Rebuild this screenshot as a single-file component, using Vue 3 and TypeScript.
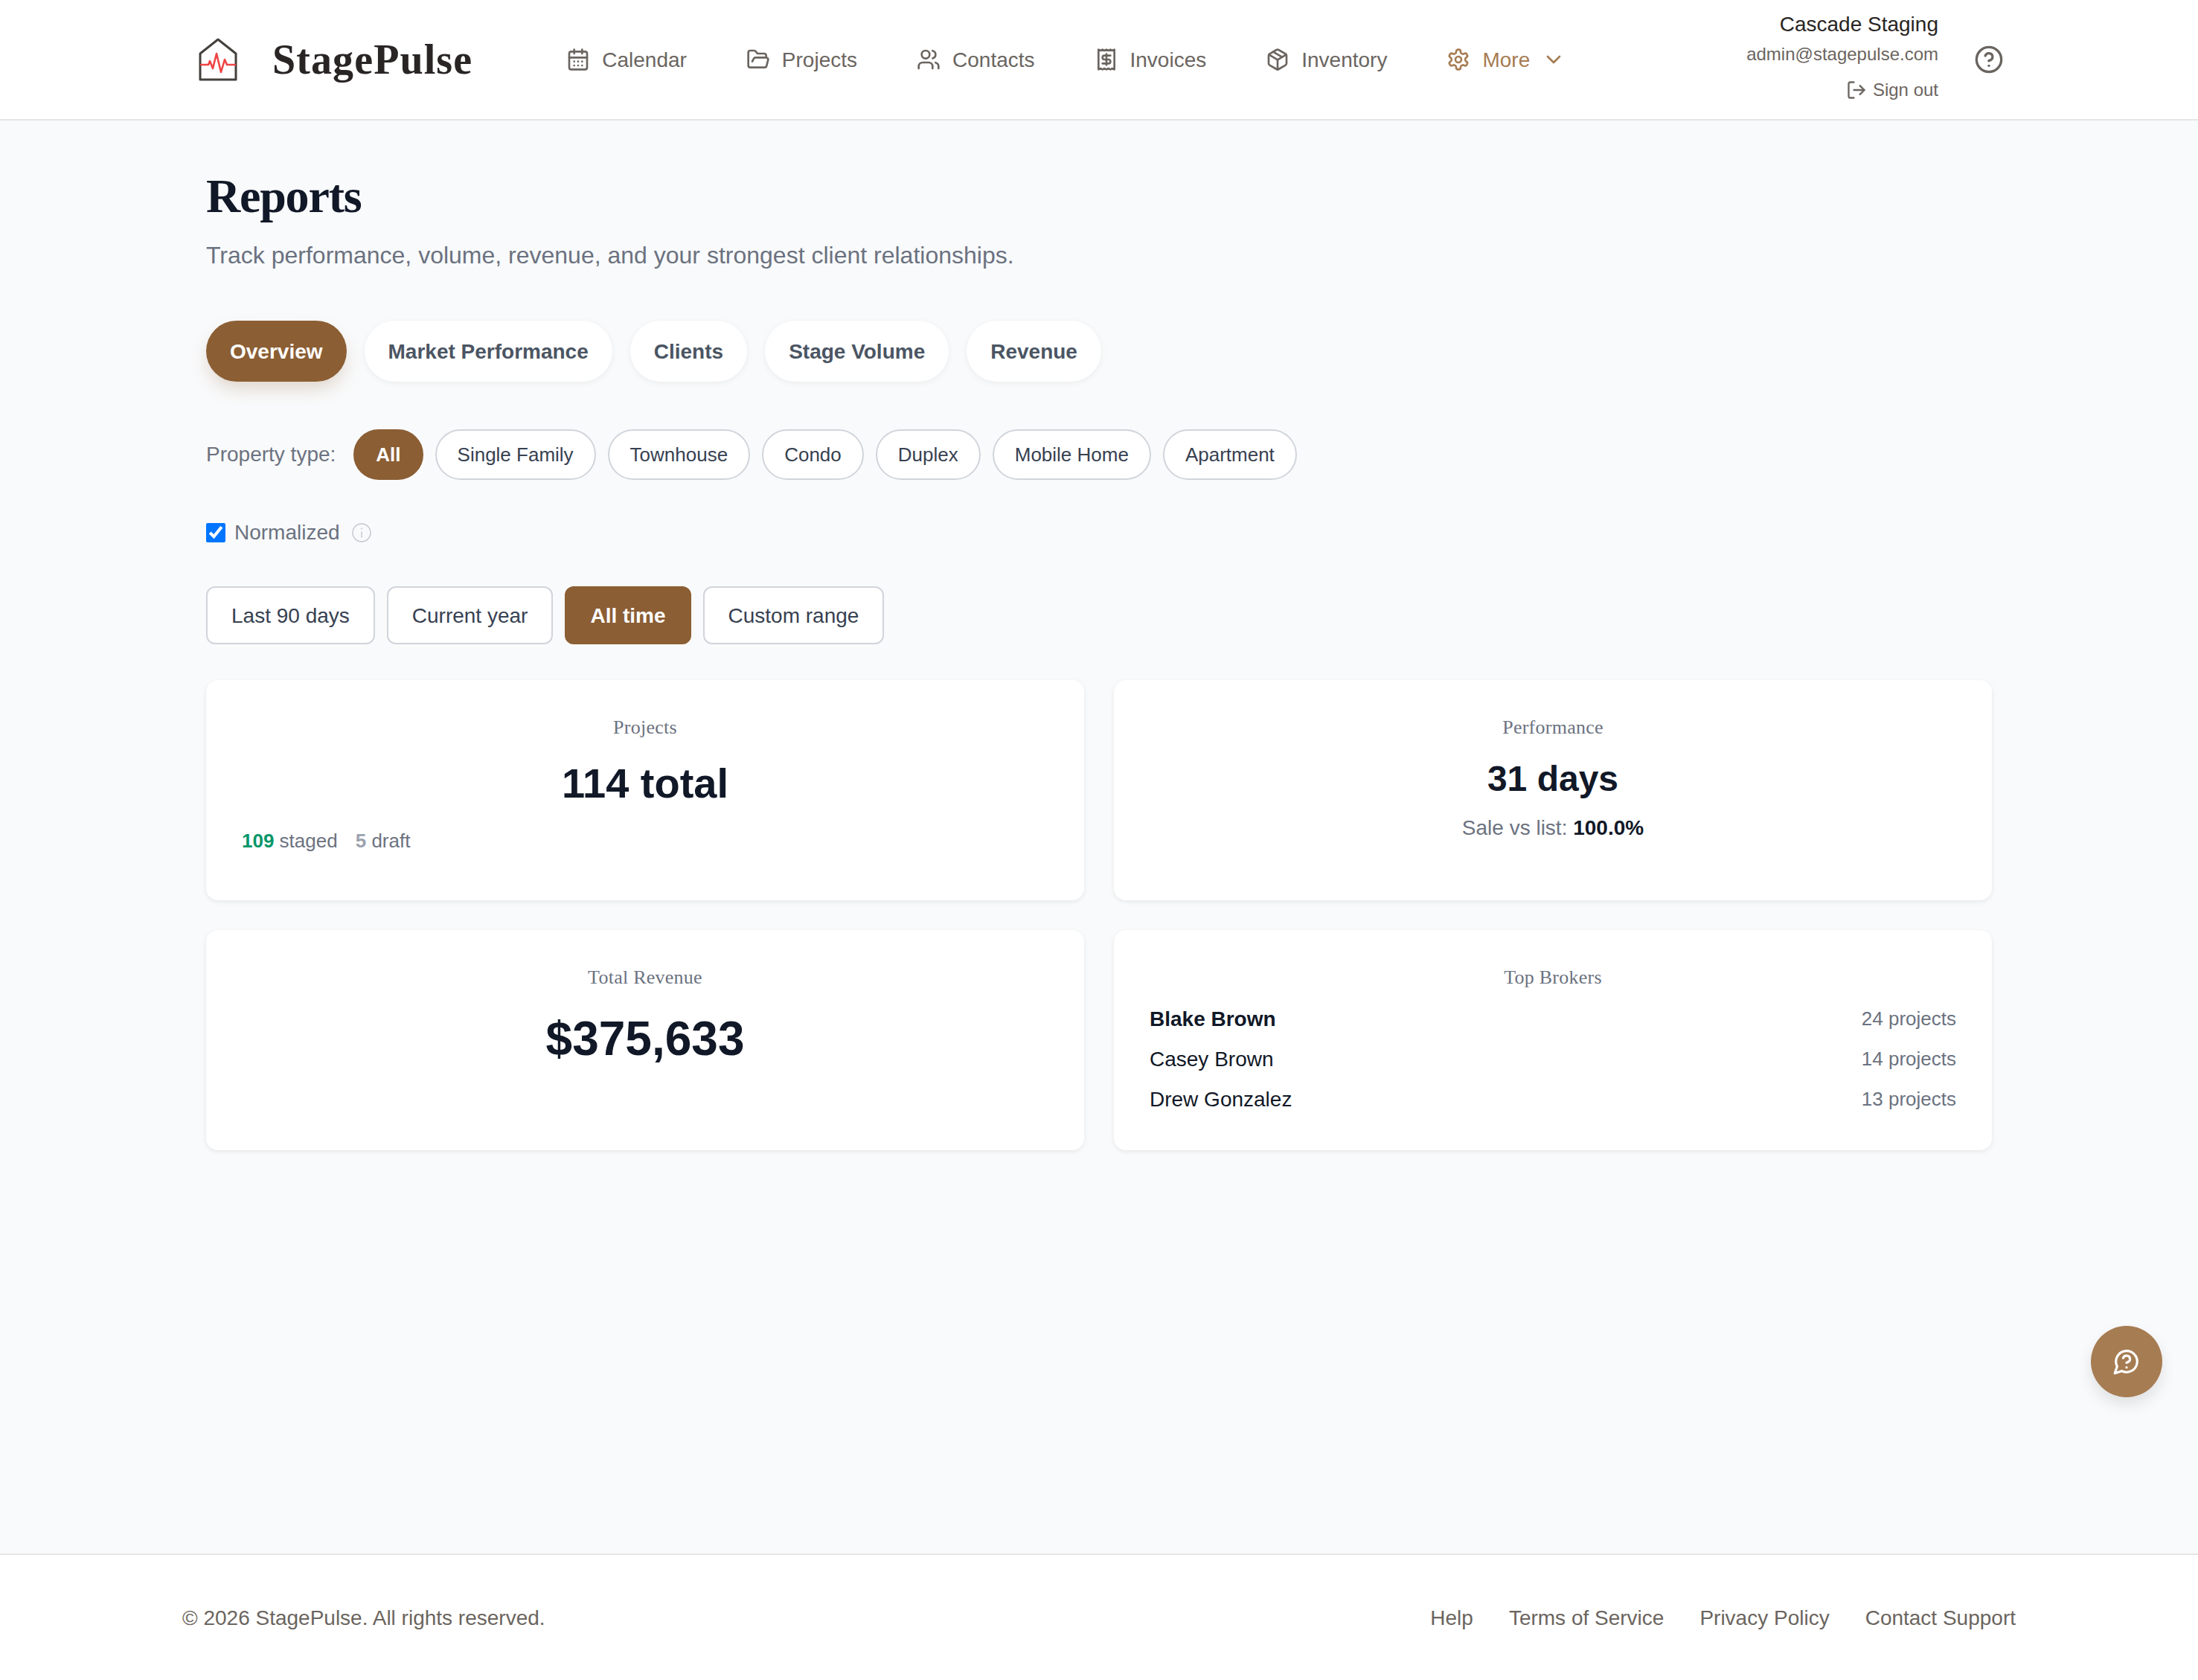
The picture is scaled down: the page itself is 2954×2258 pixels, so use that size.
<template>
  <div class="page">
    <header class="topbar">
      <div class="brand">
        <svg class="brand-mark" viewBox="0 0 52 58" fill="none" stroke-linejoin="round" stroke-linecap="round">
          <path d="M2 21 26 2l24 19v35H2Z" stroke="#44403c" stroke-width="3" />
          <path d="M3 36h10l2-5 4 10 5-20 6 25 5-17 3 7h11" stroke="#ef4444" stroke-width="2.6" />
        </svg>
        <span class="brand-name">StagePulse</span>
      </div>

      <nav class="main-nav">
        <a class="nav-item">
          <svg class="nav-icon" viewBox="0 0 24 24">
            <path d="M8 2v4M16 2v4" /><rect x="3" y="4" width="18" height="18" rx="2" /><path d="M3 10h18M8 14h.01M12 14h.01M16 14h.01M8 18h.01M12 18h.01M16 18h.01" />
          </svg>
          Calendar
        </a>
        <a class="nav-item">
          <svg class="nav-icon" viewBox="0 0 24 24">
            <path d="m6 14 1.5-2.9A2 2 0 0 1 9.24 10H20a2 2 0 0 1 1.94 2.5l-1.54 6a2 2 0 0 1-1.95 1.5H4a2 2 0 0 1-2-2V5a2 2 0 0 1 2-2h3.9a2 2 0 0 1 1.69.9l.81 1.2a2 2 0 0 0 1.67.9H18a2 2 0 0 1 2 2v2" />
          </svg>
          Projects
        </a>
        <a class="nav-item">
          <svg class="nav-icon" viewBox="0 0 24 24">
            <path d="M16 21v-2a4 4 0 0 0-4-4H6a4 4 0 0 0-4 4v2" /><circle cx="9" cy="7" r="4" /><path d="M22 21v-2a4 4 0 0 0-3-3.87M16 3.13a4 4 0 0 1 0 7.75" />
          </svg>
          Contacts
        </a>
        <a class="nav-item">
          <svg class="nav-icon" viewBox="0 0 24 24">
            <path d="M4 2v20l2-1 2 1 2-1 2 1 2-1 2 1 2-1 2 1V2l-2 1-2-1-2 1-2-1-2 1-2-1-2 1Z" /><path d="M16 8h-6a2 2 0 1 0 0 4h4a2 2 0 1 1 0 4H8" /><path d="M12 17.5v-11" />
          </svg>
          Invoices
        </a>
        <a class="nav-item">
          <svg class="nav-icon" viewBox="0 0 24 24">
            <path d="M11 21.73a2 2 0 0 0 2 0l7-4A2 2 0 0 0 21 16V8a2 2 0 0 0-1-1.73l-7-4a2 2 0 0 0-2 0l-7 4A2 2 0 0 0 3 8v8a2 2 0 0 0 1 1.73z" /><path d="M12 22V12" /><path d="m3.3 7 7.703 4.734a2 2 0 0 0 1.994 0L20.7 7" /><path d="m7.5 4.27 9 5.15" />
          </svg>
          Inventory
        </a>
        <a class="nav-item nav-more">
          <svg class="nav-icon" viewBox="0 0 24 24">
            <path d="M12.22 2h-.44a2 2 0 0 0-2 2v.18a2 2 0 0 1-1 1.73l-.43.25a2 2 0 0 1-2 0l-.15-.08a2 2 0 0 0-2.73.73l-.22.38a2 2 0 0 0 .73 2.73l.15.1a2 2 0 0 1 1 1.72v.51a2 2 0 0 1-1 1.74l-.15.09a2 2 0 0 0-.73 2.73l.22.38a2 2 0 0 0 2.73.73l.15-.08a2 2 0 0 1 2 0l.43.25a2 2 0 0 1 1 1.73V20a2 2 0 0 0 2 2h.44a2 2 0 0 0 2-2v-.18a2 2 0 0 1 1-1.73l.43-.25a2 2 0 0 1 2 0l.15.08a2 2 0 0 0 2.73-.73l.22-.39a2 2 0 0 0-.73-2.73l-.15-.08a2 2 0 0 1-1-1.74v-.5a2 2 0 0 1 1-1.74l.15-.09a2 2 0 0 0 .73-2.73l-.22-.38a2 2 0 0 0-2.73-.73l-.15.08a2 2 0 0 1-2 0l-.43-.25a2 2 0 0 1-1-1.73V4a2 2 0 0 0-2-2z" /><circle cx="12" cy="12" r="3" />
          </svg>
          More
          <svg class="chevron" viewBox="0 0 24 24"><path d="m6 9 6 6 6-6" /></svg>
        </a>
      </nav>

      <div class="account">
        <div class="account-text">
          <div class="account-name">Cascade Staging</div>
          <div class="account-email">admin@stagepulse.com</div>
          <a class="sign-out">
            <svg class="sign-out-icon" viewBox="0 0 24 24">
              <path d="M9 21H5a2 2 0 0 1-2-2V5a2 2 0 0 1 2-2h4" /><path d="m16 17 5-5-5-5" /><path d="M21 12H9" />
            </svg>
            Sign out
          </a>
        </div>
        <svg class="help-icon" viewBox="0 0 24 24">
          <circle cx="12" cy="12" r="10" /><path d="M9.09 9a3 3 0 0 1 5.83 1c0 2-3 3-3 3" /><path d="M12 17h.01" />
        </svg>
      </div>
    </header>

    <main class="content">
      <h1 class="title">Reports</h1>
      <p class="subtitle">Track performance, volume, revenue, and your strongest client relationships.</p>

      <div class="tabs">
        <button
          v-for="tab in tabs"
          :key="tab"
          class="tab"
          :class="{ active: tab === activeTab }"
          @click="activeTab = tab"
        >
          {{ tab }}
        </button>
      </div>

      <div class="type-row">
        <span class="type-label">Property type:</span>
        <button
          v-for="type in propertyTypes"
          :key="type"
          class="type-pill"
          :class="{ active: type === activeType }"
          @click="activeType = type"
        >
          {{ type }}
        </button>
      </div>

      <label class="normalized">
        <input v-model="normalized" type="checkbox" class="normalized-box" />
        <span>Normalized</span>
        <svg class="info-icon" viewBox="0 0 26 26">
          <circle cx="13" cy="13" r="12" />
          <path d="M13 11.5v8" />
          <circle class="info-dot" cx="13" cy="7.5" r="0.9" />
        </svg>
      </label>

      <div class="range-row">
        <button
          v-for="range in ranges"
          :key="range"
          class="range-btn"
          :class="{ active: range === activeRange }"
          @click="activeRange = range"
        >
          {{ range }}
        </button>
      </div>

      <section class="cards">
        <article class="card">
          <h3 class="card-label">Projects</h3>
          <div class="value value-projects">114 total</div>
          <div class="project-counts">
            <span><b class="count-staged">109</b> staged</span>
            <span><b class="count-draft">5</b> draft</span>
          </div>
        </article>

        <article class="card">
          <h3 class="card-label">Performance</h3>
          <div class="value value-days">31 days</div>
          <div class="sale-list">Sale vs list: <b>100.0%</b></div>
        </article>

        <article class="card">
          <h3 class="card-label">Total Revenue</h3>
          <div class="value value-revenue">$375,633</div>
        </article>

        <article class="card">
          <h3 class="card-label">Top Brokers</h3>
          <ul class="brokers">
            <li v-for="(broker, i) in brokers" :key="broker.name" class="broker">
              <span class="broker-name" :class="{ first: i === 0 }">{{ broker.name }}</span>
              <span class="broker-count">{{ broker.projects }} projects</span>
            </li>
          </ul>
        </article>
      </section>
    </main>

    <footer class="footer">
      <span>© 2026 StagePulse. All rights reserved.</span>
      <div class="footer-links">
        <a v-for="link in footerLinks" :key="link">{{ link }}</a>
      </div>
    </footer>

    <button class="help-fab">
      <svg viewBox="0 0 24 24">
        <path d="M7.9 20A9 9 0 1 0 4 16.1L2 22Z" /><path d="M9.09 9a3 3 0 0 1 5.83 1c0 2-3 3-3 3" /><path d="M12 17h.01" />
      </svg>
    </button>
  </div>
</template>

<script setup lang="ts">
import { ref } from 'vue'

const tabs = ['Overview', 'Market Performance', 'Clients', 'Stage Volume', 'Revenue']
const propertyTypes = ['All', 'Single Family', 'Townhouse', 'Condo', 'Duplex', 'Mobile Home', 'Apartment']
const ranges = ['Last 90 days', 'Current year', 'All time', 'Custom range']
const footerLinks = ['Help', 'Terms of Service', 'Privacy Policy', 'Contact Support']

const brokers = [
  { name: 'Blake Brown', projects: 24 },
  { name: 'Casey Brown', projects: 14 },
  { name: 'Drew Gonzalez', projects: 13 }
]

const activeTab = ref('Overview')
const activeType = ref('All')
const activeRange = ref('All time')
const normalized = ref(true)
</script>

<style>
html,
body {
  margin: 0;
  background: #f9fafb;
}
</style>

<style scoped>
.page {
  position: relative;
  display: flex;
  flex-direction: column;
  min-height: 2258px;
  font-family: "Liberation Sans", Arial, sans-serif;
  background: #f9fafb;
}

.topbar {
  display: flex;
  align-items: center;
  height: 160px;
  padding: 0 245px 0 267px;
  background: #fff;
  border-bottom: 2px solid #e7e5e4;
}

.brand {
  display: flex;
  align-items: center;
  gap: 47px;
}

.brand-mark {
  width: 52px;
  height: 58px;
}

.brand-name {
  font-family: "Liberation Serif", "Times New Roman", serif;
  font-size: 56px;
  font-weight: 700;
  letter-spacing: 1.1px;
  color: #292524;
}

.main-nav {
  display: flex;
  align-items: center;
  gap: 80px;
  margin-left: 126px;
}

.nav-item {
  display: flex;
  align-items: center;
  gap: 16px;
  padding-top: 2px;
  font-size: 28px;
  color: #6b6560;
}

.nav-icon,
.chevron,
.sign-out-icon,
.help-icon {
  fill: none;
  stroke: currentColor;
  stroke-width: 2;
  stroke-linecap: round;
  stroke-linejoin: round;
}

.nav-icon {
  width: 32px;
  height: 32px;
  margin-top: -2px;
}

.nav-more {
  color: #a67c52;
}

.chevron {
  width: 32px;
  height: 32px;
  margin-top: -2px;
}

.account {
  display: flex;
  align-items: center;
  gap: 48px;
  margin-left: auto;
}

.account-text {
  display: flex;
  flex-direction: column;
  align-items: flex-end;
  padding-bottom: 10px;
}

.account-name {
  font-size: 28px;
  line-height: 40px;
  color: #292524;
}

.account-email {
  margin-top: 4px;
  font-size: 24px;
  line-height: 32px;
  color: #6b6560;
}

.sign-out {
  display: flex;
  align-items: center;
  gap: 8px;
  margin-top: 16px;
  font-size: 24px;
  line-height: 32px;
  color: #6b6560;
}

.sign-out-icon {
  width: 28px;
  height: 28px;
}

.help-icon {
  width: 40px;
  height: 40px;
  margin-right: 16px;
  color: #6b6560;
}

.content {
  flex: 1;
  box-sizing: border-box;
  width: 2400px;
  margin: 0 auto;
  padding-top: 62px;
}

.title {
  margin: 0;
  font-family: "Liberation Serif", "Times New Roman", serif;
  font-size: 64px;
  line-height: 80px;
  font-weight: 700;
  letter-spacing: -1.2px;
  color: #111827;
}

.subtitle {
  margin: 15px 0 0;
  font-size: 32px;
  line-height: 48px;
  color: #6b7280;
}

.tabs {
  display: flex;
  gap: 24px;
  margin-top: 64px;
}

.tab {
  box-sizing: border-box;
  height: 82px;
  padding: 2px 32px 0;
  border: none;
  border-radius: 41px;
  background: #fff;
  font-family: inherit;
  font-size: 28px;
  font-weight: 700;
  color: #4b5563;
  box-shadow: 0 2px 8px rgba(0, 0, 0, 0.06);
  cursor: pointer;
}

.tab.active {
  background: #8b5e34;
  color: #fff;
  box-shadow: 0 12px 24px -4px rgba(139, 94, 52, 0.25);
}

.type-row {
  display: flex;
  align-items: center;
  gap: 16px;
  margin-top: 64px;
}

.type-label {
  margin-right: 8px;
  font-size: 28px;
  color: #6b7280;
}

.type-pill {
  height: 68px;
  padding: 0 28px;
  border: 2px solid #d1d5db;
  border-radius: 34px;
  background: #fff;
  font-family: inherit;
  font-size: 26px;
  color: #374151;
  cursor: pointer;
}

.type-pill.active {
  border-color: #8b5e34;
  background: #8b5e34;
  color: #fff;
  font-weight: 700;
}

.normalized {
  display: flex;
  align-items: center;
  height: 40px;
  margin-top: 51px;
  font-size: 28px;
  color: #6b7280;
}

.normalized-box {
  width: 26px;
  height: 26px;
  margin: 0 12px 0 0;
}

.info-icon {
  width: 26px;
  height: 26px;
  margin-left: 16px;
  fill: none;
  stroke: #c2c6cd;
  stroke-width: 1.4;
}

.info-dot {
  fill: #c2c6cd;
  stroke: none;
}

.range-row {
  display: flex;
  gap: 16px;
  margin-top: 52px;
}

.range-btn {
  box-sizing: border-box;
  height: 78px;
  padding: 1px 32px 0;
  border: 2px solid #d1d5db;
  border-radius: 12px;
  background: #fff;
  font-family: inherit;
  font-size: 28px;
  color: #374151;
  cursor: pointer;
}

.range-btn.active {
  border-color: #8b5e34;
  background: #8b5e34;
  color: #fff;
  font-weight: 700;
}

.cards {
  display: grid;
  grid-template-columns: 1fr 1fr;
  grid-auto-rows: 296px;
  gap: 40px;
  margin-top: 48px;
}

.card {
  box-sizing: border-box;
  padding: 48px;
  border-radius: 16px;
  background: #fff;
  box-shadow: 0 2px 6px rgba(0, 0, 0, 0.08);
  text-align: center;
}

.card-label {
  margin: 0;
  font-family: "Liberation Serif", "Times New Roman", serif;
  font-size: 26px;
  line-height: 32px;
  font-weight: 400;
  letter-spacing: 0.25px;
  color: #6b7280;
}

.value {
  font-weight: 700;
  color: #111827;
}

.value-projects {
  margin-top: 27px;
  font-size: 56px;
  line-height: 64px;
}

.value-days {
  margin-top: 25px;
  font-size: 48px;
  line-height: 56px;
}

.value-revenue {
  margin-top: 30px;
  font-size: 64px;
  line-height: 72px;
}

.project-counts {
  display: flex;
  gap: 24px;
  margin-top: 27px;
  font-size: 26px;
  line-height: 36px;
  color: #6b7280;
}

.count-staged {
  color: #059669;
}

.count-draft {
  color: #9ca3af;
}

.sale-list {
  margin-top: 18px;
  font-size: 28px;
  line-height: 40px;
  color: #6b7280;
}

.sale-list b {
  color: #111827;
}

.brokers {
  display: flex;
  flex-direction: column;
  gap: 14px;
  margin: 20px 0 0;
  padding: 0;
  list-style: none;
}

.broker {
  display: flex;
  align-items: center;
  justify-content: space-between;
  line-height: 40px;
}

.broker-name {
  font-size: 28px;
  color: #111827;
}

.broker-name.first {
  font-weight: 700;
}

.broker-count {
  margin-top: -2px;
  font-size: 26px;
  color: #6b7280;
}

.footer {
  display: flex;
  align-items: center;
  justify-content: space-between;
  box-sizing: border-box;
  height: 170px;
  padding: 2px 245px 0;
  background: #fff;
  border-top: 2px solid #e7e5e4;
  font-size: 28px;
  color: #6b6560;
}

.footer-links {
  display: flex;
  gap: 48px;
}

.help-fab {
  position: absolute;
  top: 1782px;
  right: 48px;
  display: flex;
  align-items: center;
  justify-content: center;
  width: 96px;
  height: 96px;
  padding: 0;
  border: none;
  border-radius: 50%;
  background: #a67c52;
  box-shadow: 0 10px 20px rgba(0, 0, 0, 0.1);
  cursor: pointer;
}

.help-fab svg {
  width: 38px;
  height: 38px;
  fill: none;
  stroke: #fff;
  stroke-width: 2;
  stroke-linecap: round;
  stroke-linejoin: round;
}
</style>
